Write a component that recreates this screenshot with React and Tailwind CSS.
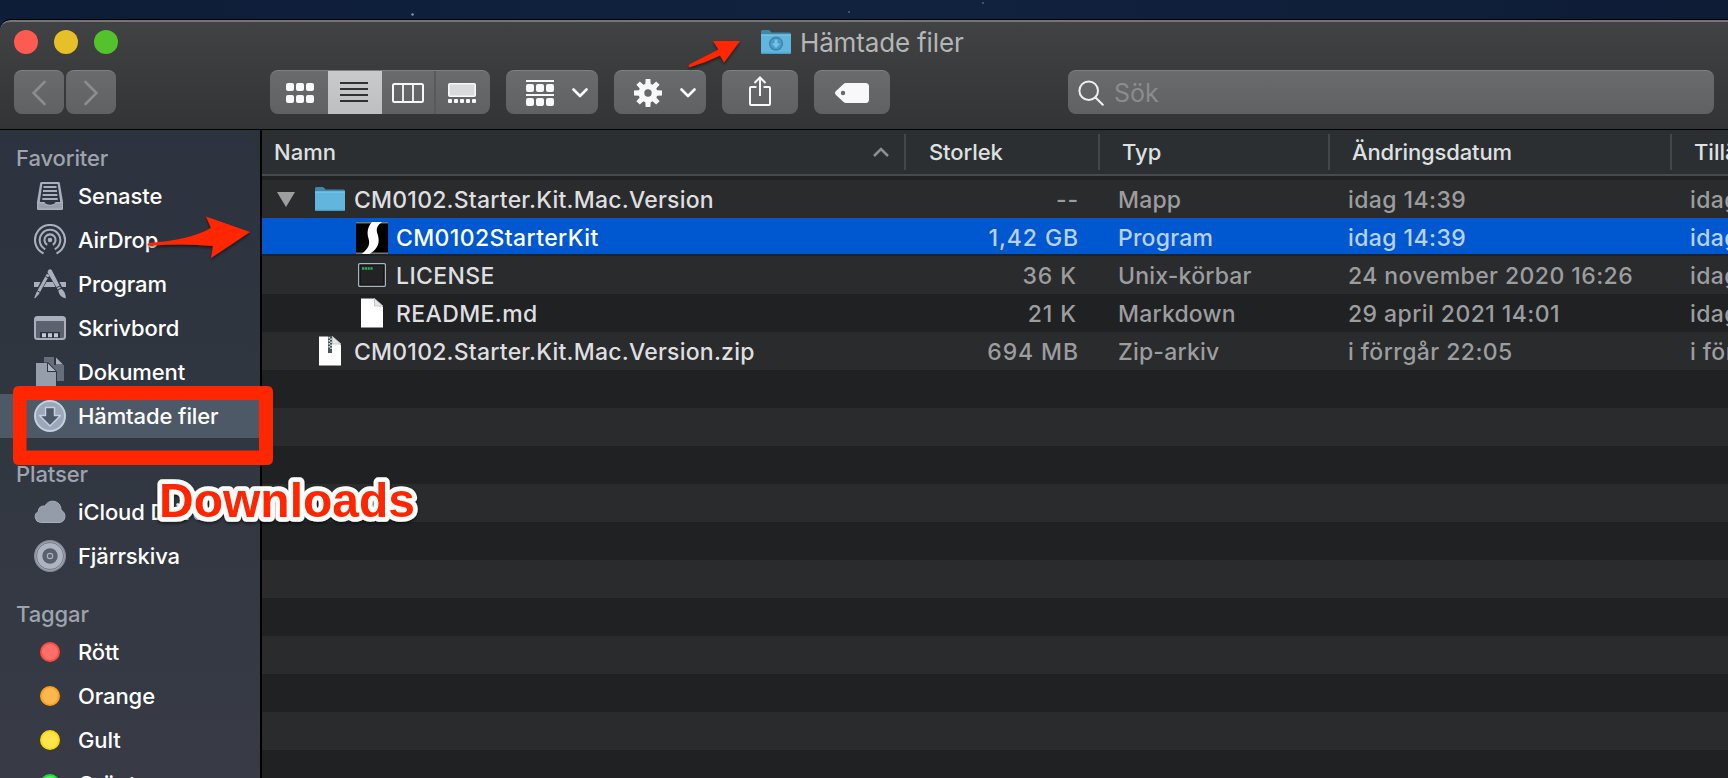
import React from 'react';

const favorites = [
  { name: 'Senaste', icon: 'recents' },
  { name: 'AirDrop', icon: 'airdrop' },
  { name: 'Program', icon: 'apps' },
  { name: 'Skrivbord', icon: 'desktop' },
  { name: 'Dokument', icon: 'documents' },
  { name: 'Hämtade filer', icon: 'downloads', active: true },
];

const places = [
  { name: 'iCloud Drive', icon: 'cloud' },
  { name: 'Fjärrskiva', icon: 'disc' },
];

const tags = [
  { name: 'Rött', color: 'bg-[#ff6e67] border-[#fb4b43]' },
  { name: 'Orange', color: 'bg-[#ffb64d] border-[#fba019]' },
  { name: 'Gult', color: 'bg-[#ffe44d] border-[#fbd80b]' },
  { name: 'Grönt', color: 'bg-[#4ff269] border-[#23d841]' },
];

const files = [
  { name: 'CM0102.Starter.Kit.Mac.Version', icon: 'folder', size: '--', type: 'Mapp', modified: 'idag 14:39', added: 'idag 14:39', open: true },
  { name: 'CM0102StarterKit', icon: 'app', size: '1,42 GB', type: 'Program', modified: 'idag 14:39', added: 'idag 14:39', child: true, selected: true },
  { name: 'LICENSE', icon: 'terminal', size: '36 K', type: 'Unix-körbar', modified: '24 november 2020 16:26', added: 'idag 14:39', child: true },
  { name: 'README.md', icon: 'file', size: '21 K', type: 'Markdown', modified: '29 april 2021 14:01', added: 'idag 14:39', child: true },
  { name: 'CM0102.Starter.Kit.Mac.Version.zip', icon: 'zip', size: '694 MB', type: 'Zip-arkiv', modified: 'i förrgår 22:05', added: 'i förrgår 22:05' },
];

const columns = 'grid grid-cols-[644px_194px_230px_342px_56px]';
const button = 'h-11 rounded-lg bg-linear-to-b from-[#6a6b6d] to-[#606163] border-t border-[#7f8082] flex items-center shrink-0';

const SidebarIcon = ({ name }) => {
  switch (name) {
    case 'recents':
      return (
        <svg width="32" height="32" viewBox="0 0 32 32" fill="none">
          <path d="M7.500 2h17Q25.500 2 25.800 3L29 22v6.500a1.500 1.500 0 0 1-1.500 1.500h-23A1.500 1.500 0 0 1 3 28.500V22L6.200 3Q6.500 2 7.500 2Z" fill="#a9afbc" />
          <path d="M8.300 4h15.400l2.500 18H5.800Z" fill="#2e3540" />
          <path d="M9.500 7h13M9 11h14M8.600 15h14.800M8.300 19h15.400" stroke="#a9afbc" strokeWidth="1.900" />
          <path d="M4.500 23.500h6c.8 3 10.200 3 11 0h6v5h-23Z" fill="#969dab" />
          <path d="M10.500 22c.8 3.500 10.200 3.500 11 0Z" fill="#2e3540" />
        </svg>
      );
    case 'airdrop':
      return (
        <svg width="32" height="32" viewBox="0 0 32 32" fill="none" stroke="#a9afbc" strokeWidth="2.100">
          <circle cx="16" cy="16" r="2.300" fill="#a9afbc" stroke="none" />
          <path d="M13.200 20.800a5.600 5.600 0 1 1 5.600 0" />
          <path d="M11.200 25.200a10.300 10.300 0 1 1 9.600 0" />
          <path d="M9.500 29.500a15 15 0 1 1 13 0" />
        </svg>
      );
    case 'apps':
      return (
        <svg width="32" height="32" viewBox="0 0 32 32" fill="#a9afbc">
          <path d="M0 14h6.500L4 19H0ZM12.500 14h6.500l2.400 5H9.500ZM25.500 14H32v5h-4Z" />
          <path d="M12.800 5.800l2.600 1.500L5 26l-3.800 4.200c-.5.300-.9 0-.8-.6L2.400 24.500Z" />
          <path d="M14.300 2.200c1-1.500 3-1.200 3.800.5l8.700 17.100-3 1.600L14 5.500c-.6-1.200-.4-2.300.3-3.300Z" />
          <path d="M24.300 22.300l3-1.600c3 2 4.500 5.500 4.600 9.800-3-.8-7-2.500-7.600-8.200Z" />
          <path d="M11.500 8.300l2.600 1.500M3.300 22.800l2.900 1.700M22.200 19.900l3.800-2" stroke="#2e3540" strokeWidth="1" />
        </svg>
      );
    case 'desktop':
      return (
        <svg width="32" height="32" viewBox="0 0 32 32">
          <rect x="1" y="5" width="30" height="22" rx="2.500" fill="#5b6370" stroke="#a9afbc" strokeWidth="2" />
          <path d="M2 6h28v3H2Z" fill="#a9afbc" />
          <path d="M6 20h20v6H6Z" fill="#2e3540" />
          <path d="M8 21.300h4v4H8ZM14 21.300h4v4h-4ZM20 21.300h4v4h-4Z" fill="#c3c8d1" />
        </svg>
      );
    case 'documents':
      return (
        <svg width="32" height="32" viewBox="0 0 32 32">
          <path d="M10 1h10v8h10v16H10Z" fill="#666e7b" />
          <path d="M22 1.500v7h7Z" fill="#a9afbc" />
          <path d="M1 6.500h13.500L23 15.500V32H1Z" fill="#2e3540" />
          <path d="M2 7h11v9h9v16H2Z" fill="#979eab" />
          <path d="M14 7.500v7.500h7.500Z" fill="#b1b7c2" />
        </svg>
      );
    case 'downloads':
      return (
        <svg width="32" height="32" viewBox="0 0 32 32">
          <circle cx="16" cy="16" r="15" fill="#9ba8ba" stroke="#c3d0e1" strokeWidth="2" />
          <path d="M11.500 7.500h9v8h6L16 26 5.500 15.500h6Z" fill="#4d5968" stroke="#c3d0e1" strokeWidth="1.500" strokeLinejoin="round" />
        </svg>
      );
    case 'cloud':
      return (
        <svg width="32" height="32" viewBox="0 0 32 32">
          <path d="M6.500 26.500A5.800 5.800 0 0 1 4.500 15.500C4 12 7.500 9 11 10.300 12.500 6.500 16 5 19 5.200c5 .3 8.300 4.300 8 9 6 2.300 5 12.300-2 12.300Z" fill="#959ca9" stroke="#a9afbc" />
        </svg>
      );
    default:
      return (
        <svg width="32" height="32" viewBox="0 0 32 32">
          <circle cx="16" cy="16" r="15.300" fill="#a9afbc" stroke="#858c99" strokeWidth="1.400" />
          <circle cx="16" cy="16" r="13.500" fill="#aeb4c0" stroke="#5b6370" strokeWidth=".700" />
          <circle cx="16" cy="16" r="7.700" fill="#5a616e" />
          <circle cx="16" cy="16" r="2.700" fill="none" stroke="#a9afbc" strokeWidth="1.200" />
        </svg>
      );
  }
};

const FolderIcon = ({ download }) => (
  <svg width="30" height="24" viewBox="0 0 30 24">
    <path d="M0 1.500Q0 0 1.500 0h6Q9 0 9.700 1.500L10.500 2.500H28.500Q30 2.500 30 4V8H0Z" fill="#4088a9" />
    <path d="M0 4.500H30V22.500Q30 24 28.500 24h-27Q0 24 0 22.500Z" fill="#62b5dc" />
    <path d="M0 5h30" stroke="#82cbe9" />
    <path d="M0 23.300h30" stroke="#4796ba" />
    {download && (
      <g>
        <circle cx="15" cy="13.700" r="6.300" fill="#4f9fca" stroke="#3d86b0" strokeWidth="1.600" />
        <path d="M13 9h4v4h3.500L15 18.700 9.500 13H13Z" fill="#70c4ea" stroke="#3d86b0" strokeWidth=".600" />
      </g>
    )}
  </svg>
);

const FileIcon = ({ name }) => {
  switch (name) {
    case 'folder':
      return <FolderIcon />;
    case 'app':
      return (
        <svg width="32" height="32" viewBox="0 0 32 32">
          <path d="M0 0h32v32H0Z" fill="#000" />
          <path d="M0 .7h32M0 31.300h32" stroke="#777" strokeWidth="1.400" />
          <path d="M16 0H26C20.500 4 20 7 21.500 12 23.500 18 23.500 24 17 29.500L13.500 32H5.500C12 27 14.500 22.500 12.500 16.500 10.500 10 12 4.500 16 0Z" fill="#fff" />
        </svg>
      );
    case 'terminal':
      return (
        <svg width="28" height="24" viewBox="0 0 28 24">
          <rect x=".700" y=".700" width="26.600" height="22.600" rx="1" fill="#222324" stroke="#a8b5bb" strokeWidth="1.400" />
          <rect x="2" y="2" width="24" height="20" fill="none" stroke="#0d0e0e" />
          <path d="M4 5.500h11" stroke="#35a957" strokeWidth="2.600" strokeDasharray="2.200 .6" />
        </svg>
      );
    default:
      return (
        <svg width="22" height="30" viewBox="0 0 22 30">
          <path d="M0 .5h13.500L22 9v20.500H0Z" fill="#fff" />
          <path d="M13.500.5V8H22Z" fill="#e6e6e6" stroke="#bcbcbc" strokeWidth=".800" />
          {name === 'zip' && (
            <g>
              <path d="M11 0v17" stroke="#4b5357" strokeWidth="4" />
              <path d="M10.200 1v12M12 2.500v12" stroke="#cfd5d8" strokeWidth="1.600" strokeDasharray="1.500 1.500" />
            </g>
          )}
        </svg>
      );
  }
};

const SidebarSection = ({ title, height, children }) => (
  <div>
    <div className={`${height} flex items-end pl-4 text-[#9ea3ae]`}>
      <span className="leading-8">{title}</span>
    </div>
    {children}
  </div>
);

const SidebarItem = ({ name, icon, active, color }) => (
  <div className={`h-11 flex items-center pl-[34px] gap-3 text-white ${active ? 'bg-[#4e5967]' : ''}`}>
    <div className="w-8 flex justify-center">
      {icon ? <SidebarIcon name={icon} /> : <span className={`size-5 rounded-full border-2 ${color}`} />}
    </div>
    <span>{name}</span>
  </div>
);

const Chevron = () => (
  <svg width="16" height="10" viewBox="0 0 16 10" fill="none" stroke="#f8f8fa" strokeWidth="2.600" strokeLinecap="round" strokeLinejoin="round">
    <path d="M1.500 1.500 8 8l6.500-6.500" />
  </svg>
);

const Toolbar = () => (
  <div className="h-[58px] flex items-start pl-3.5 pr-3.5">
    <div className="flex gap-0.5 w-64">
      <div className={`${button} w-[50px] justify-center`}>
        <svg width="14" height="26" viewBox="0 0 14 26" fill="none" stroke="#8c8d8f" strokeWidth="2.600" strokeLinecap="round">
          <path d="M12.500 2 1.500 13l11 11" />
        </svg>
      </div>
      <div className={`${button} w-[50px] justify-center`}>
        <svg width="14" height="26" viewBox="0 0 14 26" fill="none" stroke="#8c8d8f" strokeWidth="2.600" strokeLinecap="round">
          <path d="M1.500 2l11 11-11 11" />
        </svg>
      </div>
    </div>

    {/* View modes */}
    <div className={`${button} w-[220px] overflow-hidden`}>
      <div className="w-[58px] pl-0.5 flex justify-center">
        <svg width="28" height="20" viewBox="0 0 28 20" fill="#f8f8fa">
          <rect width="8" height="8" rx="2" /><rect x="10" width="8" height="8" rx="2" /><rect x="20" width="8" height="8" rx="2" />
          <rect y="12" width="8" height="8" rx="2" /><rect x="10" y="12" width="8" height="8" rx="2" /><rect x="20" y="12" width="8" height="8" rx="2" />
        </svg>
      </div>
      <div className="w-[54px] h-11 -mt-px pr-0.5 flex justify-center items-center bg-linear-to-b from-[#c9cacc] to-[#bebfc1]">
        <svg width="28" height="20" viewBox="0 0 28 20" stroke="#303133" strokeWidth="2">
          <path d="M0 1h28M0 7h28M0 13h28M0 19h28" />
        </svg>
      </div>
      <div className="w-[54px] h-full flex justify-center items-center border-r-2 border-[#58595b]">
        <svg width="32" height="20" viewBox="0 0 32 20" fill="none" stroke="#f8f8fa">
          <rect x="1" y="1" width="30" height="18" rx="1.500" strokeWidth="2" />
          <path d="M11 1v18M21 1v18" strokeWidth="1.800" />
        </svg>
      </div>
      <div className="w-[52px] flex justify-center">
        <svg width="28" height="20" viewBox="0 0 28 20" fill="#f8f8fa">
          <rect x=".8" y=".8" width="26.400" height="12.400" rx="1" fill="#d9dadc" stroke="#f8f8fa" strokeWidth="1.600" />
          <rect y="16" width="4" height="4" rx="1" /><rect x="6" y="16" width="4" height="4" rx="1" /><rect x="12" y="16" width="4" height="4" rx="1" />
          <rect x="18" y="16" width="4" height="4" rx="1" /><rect x="24" y="16" width="4" height="4" rx="1" />
        </svg>
      </div>
    </div>

    <div className={`${button} w-[92px] ml-4 pl-5 pr-2.5 justify-between`}>
      <svg width="28" height="26" viewBox="0 0 28 26" fill="#f8f8fa">
        <path d="M0 0h28v2H0ZM0 14h28v2H0Z" />
        <rect y="4" width="8" height="8" rx="2" /><rect x="10" y="4" width="8" height="8" rx="2" /><rect x="20" y="4" width="8" height="8" rx="2" />
        <rect y="18" width="8" height="8" rx="2" /><rect x="10" y="18" width="8" height="8" rx="2" /><rect x="20" y="18" width="8" height="8" rx="2" />
      </svg>
      <Chevron />
    </div>

    <div className={`${button} w-[92px] ml-4 pl-5 pr-2.5 justify-between`}>
      <svg width="28" height="28" viewBox="-14 -14 28 28">
        {[0, 45, 90, 135].map((angle) => (
          <path key={angle} d="M-2.400-14h4.800L3.200 0 2.400 14h-4.800L-3.200 0Z" fill="#f8f8fa" transform={`rotate(${angle})`} />
        ))}
        <circle r="9.500" fill="#f8f8fa" />
        <circle r="3.700" fill="#67686a" />
      </svg>
      <Chevron />
    </div>

    <div className={`${button} w-[76px] ml-4 pb-1 justify-center`}>
      <svg width="22" height="30" viewBox="0 0 22 30" fill="none" stroke="#f8f8fa" strokeWidth="2">
        <path d="M7.500 11H2Q1 11 1 12v16q0 1 1 1h18q1 0 1-1V12q0-1-1-1h-5.500" />
        <path d="M11 20V2M5.500 7 11 1.500 16.500 7" />
      </svg>
    </div>

    <div className={`${button} w-[76px] ml-4 justify-center`}>
      <svg width="34" height="20" viewBox="0 0 34 20">
        <path d="M11 0h19.500Q34 0 34 3.500v13Q34 20 30.500 20H11Q9.500 20 8.300 18.800L1 12Q-1 10 1 8L8.300 1.200Q9.500 0 11 0Z" fill="#f8f8fa" />
        <circle cx="8" cy="10" r="2.200" fill="#67686a" />
      </svg>
    </div>

    <div className={`${button} w-[646px] ml-auto pl-2.5 gap-2.5`}>
      <svg width="26" height="26" viewBox="0 0 26 26" fill="none" stroke="#f0f0f2" strokeWidth="2" strokeLinecap="round">
        <circle cx="10.700" cy="10.700" r="9.300" />
        <path d="M17.500 17.500 24.800 24.800" />
      </svg>
      <span className="pt-0.5 text-[25px] text-[#8b8c8e]">Sök</span>
    </div>
  </div>
);

const FileRow = ({ file, index }) => {
  const muted = file.selected ? 'text-[#b9d0f6]' : 'text-[#9c9d9e]';
  const background = index % 2 === 0 ? 'bg-[#2a2b2d]' : 'bg-[#202123]';
  return (
    <div className={`h-[38px] shrink-0 ${background}`}>
      {file && (
        <div className={`${columns} items-center text-[23px] font-[450] whitespace-nowrap leading-9 ${file.selected ? 'h-9 bg-[#0058d0]' : 'h-[38px]'}`}>
          <div className={`flex items-center ${file.selected ? 'text-white font-medium' : 'text-[#dfdfe0]'} ${file.child ? 'tracking-[0.38px]' : 'tracking-[0.22px]'}`}>
            <div className="w-[53px] shrink-0 pl-[15px]">
              {file.open && (
                <svg width="18" height="15" viewBox="0 0 18 15" fill="#9d9e9f">
                  <path d="M0 0h18L9 15Z" />
                </svg>
              )}
            </div>
            <div className={`flex shrink-0 ${file.child ? 'w-[81px] pl-[41px]' : 'w-[39px]'}`}>
              <div className={`flex items-center justify-center ${file.child ? 'w-8' : 'w-[30px]'} ${file.selected ? 'pt-0.5' : ''}`}>
                <FileIcon name={file.icon} />
              </div>
            </div>
            <span className="pt-0.5">{file.name}</span>
          </div>
          <span className={`${muted} pt-0.5 text-right tracking-[0.9px] ${file.size.endsWith('K') ? 'pr-[23px]' : 'pr-[21px]'}`}>{file.size}</span>
          <span className={`${muted} pt-0.5 pl-[18px] tracking-[0.2px]`}>{file.type}</span>
          <span className={`${muted} pt-0.5 pl-[18px] tracking-[0.43px]`}>{file.modified}</span>
          <span className={`${muted} pt-0.5 pl-[18px] tracking-[0.43px] overflow-hidden`}>{file.added}</span>
        </div>
      )}
    </div>
  );
};

// Arrows, frame and caption drawn on top of the window
const Annotations = () => (
  <svg className="absolute inset-0 pointer-events-none" width="1728" height="778" viewBox="0 0 1728 778">
    <defs>
      <filter id="shadow" x="-20%" y="-20%" width="140%" height="150%">
        <feDropShadow dx="0" dy="2" stdDeviation="1.500" floodOpacity="0.5" />
      </filter>
    </defs>
    <g fill="#ff2600" filter="url(#shadow)">
      <path d="M740 41H713L718.500 49.500Q703 57.500 690 64Q687.500 66 689.500 67.300Q706 62.500 720 55.500L724 62.500Z" />
      <path d="M250 232 206 216.500 211 228Q190 240 149 243Q146 244.500 149 245.800Q185 243 213 246L211 258Z" />
    </g>
    <path d="M19 386H267Q273 386 273 392V459Q273 465 267 465H19Q13 465 13 459V392Q13 386 19 386ZM26.500 400V450.500H259V400Z" fill="#ff2600" fillRule="evenodd" />
    <g className="font-['Liberation_Sans',Arial,sans-serif] font-bold text-[48px]" filter="url(#shadow)">
      <text x="159" y="516.500" fill="#ff2600" stroke="#fff" strokeWidth="9.500" strokeLinejoin="round" paintOrder="stroke">
        Downloads
      </text>
    </g>
  </svg>
);

export default function App() {
  return (
    <div className="relative w-[1728px] h-[778px] overflow-hidden flex flex-col bg-[#10203d] font-['Inter','Liberation_Sans',sans-serif]">
      <div className="h-[19px] shrink-0 bg-linear-to-r from-[#0d1d38] via-[#11223f] to-[#0e1c36]">
        <svg width="1728" height="19" fill="#7f9dba">
          <circle cx="412.500" cy="14.500" r="1.200" />
          <circle cx="849" cy="12" r=".900" opacity=".6" />
          <circle cx="983" cy="3" r=".900" opacity=".6" />
        </svg>
      </div>

      <div className="h-[759px] flex flex-col rounded-tl-[10px] border-t border-black overflow-hidden">
        <div className="h-[109px] shrink-0 rounded-tl-[10px] border-t-2 border-[#747577] bg-linear-to-b from-[#414243] to-[#333436]">
          {/* Title bar */}
          <div className="h-12 flex items-start">
            <div className="w-[747px] flex gap-4 pl-3.5 pt-2">
              <span className="size-6 rounded-full bg-[#ff5a52]" />
              <span className="size-6 rounded-full bg-[#e6c029]" />
              <span className="size-6 rounded-full bg-[#53c22b]" />
            </div>
            <div className="flex items-start gap-[9px] pt-2 pl-3.5">
              <FolderIcon download />
              <span className="-mt-[3px] text-[26px] leading-8 tracking-[-0.15px] text-[#b5b6b7]">Hämtade filer</span>
            </div>
          </div>
          <Toolbar />
        </div>

        <div className="flex flex-1 min-h-0 border-t border-black">
          {/* Sidebar */}
          <div className="w-[260px] shrink-0 overflow-hidden bg-linear-to-b from-[#2c333e] via-[#313741] to-[#383b45] font-medium text-[22px] tracking-[-0.1px]">
            <SidebarSection title="Favoriter" height="h-11">
              {favorites.map((item) => <SidebarItem key={item.name} {...item} />)}
            </SidebarSection>
            <SidebarSection title="Platser" height="h-[52px]">
              {places.map((item) => <SidebarItem key={item.name} {...item} />)}
            </SidebarSection>
            <SidebarSection title="Taggar" height="h-[52px]">
              {tags.map((item) => <SidebarItem key={item.name} {...item} />)}
            </SidebarSection>
          </div>

          {/* File list */}
          <div className="flex-1 min-w-0 flex flex-col border-l-2 border-black bg-[#202224]">
            <div className={`${columns} h-[46px] shrink-0 items-start pt-1 border-b-2 border-[#474b4d] bg-[#2b2f32] text-[22px] leading-9 font-medium text-[#dfe0e0] whitespace-nowrap`}>
              <div className="h-9 flex items-center justify-between pl-3 pr-[15px] border-r-2 border-[#43474a]">
                <span>Namn</span>
                <svg width="16" height="10" viewBox="0 0 16 10" fill="none" stroke="#8b8d8f" strokeWidth="2.600">
                  <path d="M1 9 8 2l7 7" />
                </svg>
              </div>
              <span className="h-9 pl-[23px] tracking-[-0.1px] border-r-2 border-[#43474a]">Storlek</span>
              <span className="h-9 pl-[22px] border-r-2 border-[#43474a]">Typ</span>
              <span className="h-9 pl-[22px] tracking-[-0.15px] border-r-2 border-[#43474a]">Ändringsdatum</span>
              <span className="h-9 pl-[22px] overflow-hidden">Tillägg</span>
            </div>
            <div className="flex flex-col pt-1">
              {Array.from({ length: 16 }, (_, i) => (
                <FileRow key={i} index={i} file={files[i] || false} />
              ))}
            </div>
          </div>
        </div>
      </div>

      <Annotations />
    </div>
  );
}
